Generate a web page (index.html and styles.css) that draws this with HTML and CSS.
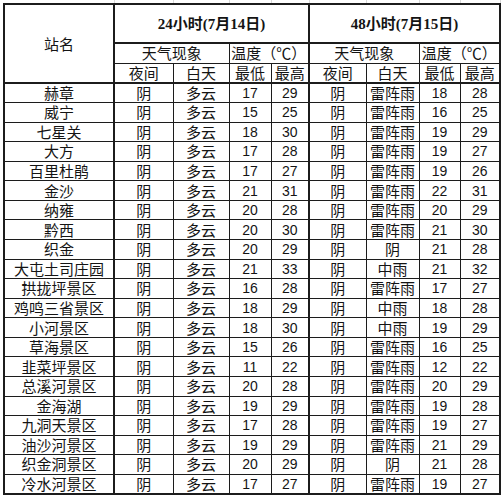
FILE: index.html
```html
<!DOCTYPE html>
<html lang="zh-CN">
<head>
<meta charset="utf-8">
<title>毕节市景区天气预报</title>
<link rel="stylesheet" href="styles.css">
</head>
<body>
<table class="sheet">
  <colgroup>
    <col class="c-name"><col class="c-n1"><col class="c-d1"><col class="c-lo1"><col class="c-hi1">
    <col class="c-n2"><col class="c-d2"><col class="c-lo2"><col class="c-hi2">
  </colgroup>
  <tr class="grid-top">
    <td></td><td></td><td></td><td></td><td></td><td></td><td></td><td></td><td></td>
  </tr>
  <tr class="h1">
    <td rowspan="3" class="name-h bl br2">站名</td>
    <td colspan="4" class="period br2">24小时(7月14日)</td>
    <td colspan="4" class="period br2">48小时(7月15日)</td>
  </tr>
  <tr class="h2">
    <td colspan="2">天气现象</td>
    <td colspan="2" class="br2">温度（℃）</td>
    <td colspan="2">天气现象</td>
    <td colspan="2" class="br2">温度（℃）</td>
  </tr>
  <tr class="h3">
    <td>夜间</td><td>白天</td><td>最低</td><td class="br2">最高</td>
    <td>夜间</td><td>白天</td><td>最低</td><td class="br2">最高</td>
  </tr>
  <tr class="first"><td class="bl br2">赫章</td><td>阴</td><td>多云</td><td class="num">17</td><td class="num br2">29</td><td>阴</td><td>雷阵雨</td><td class="num">18</td><td class="num br2">28</td></tr>
  <tr><td class="bl br2">威宁</td><td>阴</td><td>多云</td><td class="num">15</td><td class="num br2">25</td><td>阴</td><td>雷阵雨</td><td class="num">16</td><td class="num br2">25</td></tr>
  <tr><td class="bl br2">七星关</td><td>阴</td><td>多云</td><td class="num">18</td><td class="num br2">30</td><td>阴</td><td>雷阵雨</td><td class="num">19</td><td class="num br2">29</td></tr>
  <tr><td class="bl br2">大方</td><td>阴</td><td>多云</td><td class="num">17</td><td class="num br2">28</td><td>阴</td><td>雷阵雨</td><td class="num">19</td><td class="num br2">27</td></tr>
  <tr><td class="bl br2">百里杜鹃</td><td>阴</td><td>多云</td><td class="num">17</td><td class="num br2">27</td><td>阴</td><td>雷阵雨</td><td class="num">19</td><td class="num br2">26</td></tr>
  <tr><td class="bl br2">金沙</td><td>阴</td><td>多云</td><td class="num">21</td><td class="num br2">31</td><td>阴</td><td>雷阵雨</td><td class="num">22</td><td class="num br2">31</td></tr>
  <tr><td class="bl br2">纳雍</td><td>阴</td><td>多云</td><td class="num">20</td><td class="num br2">28</td><td>阴</td><td>雷阵雨</td><td class="num">20</td><td class="num br2">29</td></tr>
  <tr><td class="bl br2">黔西</td><td>阴</td><td>多云</td><td class="num">20</td><td class="num br2">30</td><td>阴</td><td>雷阵雨</td><td class="num">21</td><td class="num br2">30</td></tr>
  <tr><td class="bl br2">织金</td><td>阴</td><td>多云</td><td class="num">20</td><td class="num br2">29</td><td>阴</td><td>阴</td><td class="num">21</td><td class="num br2">28</td></tr>
  <tr><td class="bl br2">大屯土司庄园</td><td>阴</td><td>多云</td><td class="num">21</td><td class="num br2">33</td><td>阴</td><td>中雨</td><td class="num">21</td><td class="num br2">32</td></tr>
  <tr><td class="bl br2">拱拢坪景区</td><td>阴</td><td>多云</td><td class="num">16</td><td class="num br2">28</td><td>阴</td><td>雷阵雨</td><td class="num">17</td><td class="num br2">27</td></tr>
  <tr><td class="bl br2">鸡鸣三省景区</td><td>阴</td><td>多云</td><td class="num">18</td><td class="num br2">29</td><td>阴</td><td>中雨</td><td class="num">18</td><td class="num br2">28</td></tr>
  <tr><td class="bl br2">小河景区</td><td>阴</td><td>多云</td><td class="num">18</td><td class="num br2">30</td><td>阴</td><td>中雨</td><td class="num">19</td><td class="num br2">29</td></tr>
  <tr><td class="bl br2">草海景区</td><td>阴</td><td>多云</td><td class="num">15</td><td class="num br2">26</td><td>阴</td><td>雷阵雨</td><td class="num">16</td><td class="num br2">25</td></tr>
  <tr><td class="bl br2">韭菜坪景区</td><td>阴</td><td>多云</td><td class="num">11</td><td class="num br2">22</td><td>阴</td><td>雷阵雨</td><td class="num">12</td><td class="num br2">22</td></tr>
  <tr><td class="bl br2">总溪河景区</td><td>阴</td><td>多云</td><td class="num">20</td><td class="num br2">28</td><td>阴</td><td>雷阵雨</td><td class="num">20</td><td class="num br2">29</td></tr>
  <tr><td class="bl br2">金海湖</td><td>阴</td><td>多云</td><td class="num">19</td><td class="num br2">29</td><td>阴</td><td>雷阵雨</td><td class="num">19</td><td class="num br2">28</td></tr>
  <tr><td class="bl br2">九洞天景区</td><td>阴</td><td>多云</td><td class="num">17</td><td class="num br2">28</td><td>阴</td><td>雷阵雨</td><td class="num">19</td><td class="num br2">27</td></tr>
  <tr><td class="bl br2">油沙河景区</td><td>阴</td><td>多云</td><td class="num">19</td><td class="num br2">29</td><td>阴</td><td>雷阵雨</td><td class="num">21</td><td class="num br2">29</td></tr>
  <tr><td class="bl br2">织金洞景区</td><td>阴</td><td>多云</td><td class="num">20</td><td class="num br2">29</td><td>阴</td><td>阴</td><td class="num">21</td><td class="num br2">28</td></tr>
  <tr class="last"><td class="bl br2">冷水河景区</td><td>阴</td><td>多云</td><td class="num">17</td><td class="num br2">27</td><td>阴</td><td>雷阵雨</td><td class="num">19</td><td class="num br2">27</td></tr>
</table>
</body>
</html>
```
FILE: styles.css
```css
html, body {
  margin: 0;
  padding: 0;
  background: #ffffff;
}
body {
  padding-left: 3px;
  font-family: "Noto Sans CJK SC", "Liberation Sans", sans-serif;
  color: #141414;
}
.sheet {
  border-collapse: collapse;
  table-layout: fixed;
  width: 496px;
}
.c-name { width: 110px; }
.c-n1 { width: 59px; }
.c-d1 { width: 56px; }
.c-lo1 { width: 42px; }
.c-hi1 { width: 38px; }
.c-n2 { width: 57px; }
.c-d2 { width: 53px; }
.c-lo2 { width: 41px; }
.c-hi2 { width: 40px; }

.sheet td {
  border: 1px solid #1c1c1c;
  padding: 0;
  text-align: center;
  vertical-align: middle;
  font-size: 15px;
  line-height: 16px;
  white-space: nowrap;
  overflow: hidden;
}
.sheet tr {
  height: 19.57px;
}
.sheet .grid-top {
  height: 4px;
}
.sheet .grid-top td {
  border: none;
  border-right: 1px solid #d9d9d9;
  font-size: 0;
  line-height: 0;
}
.sheet .h1 {
  height: 39px;
}
.sheet .h1 td {
  border-top: 2px solid #1c1c1c;
  border-bottom: 2px solid #1c1c1c;
}
.sheet .h1 .name-h {
  border-bottom: 2px solid #1c1c1c;
}
.sheet .h2, .sheet .h3 {
  height: 20px;
}
.sheet .h3 td {
  border-bottom: 2px solid #1c1c1c;
}
.sheet .last td {
  border-bottom: 2px solid #1c1c1c;
}
.sheet td.bl {
  border-left: 2px solid #1c1c1c;
}
.sheet td.br2 {
  border-right: 2px solid #1c1c1c;
}
.period {
  font-weight: bold;
  font-family: "Liberation Serif", "Noto Sans CJK SC", serif;
  font-size: 15px;
}
.num {
  font-family: "Liberation Sans", "Noto Sans CJK SC", sans-serif;
}
.sheet td.num {
  font-size: 14px;
}
```
